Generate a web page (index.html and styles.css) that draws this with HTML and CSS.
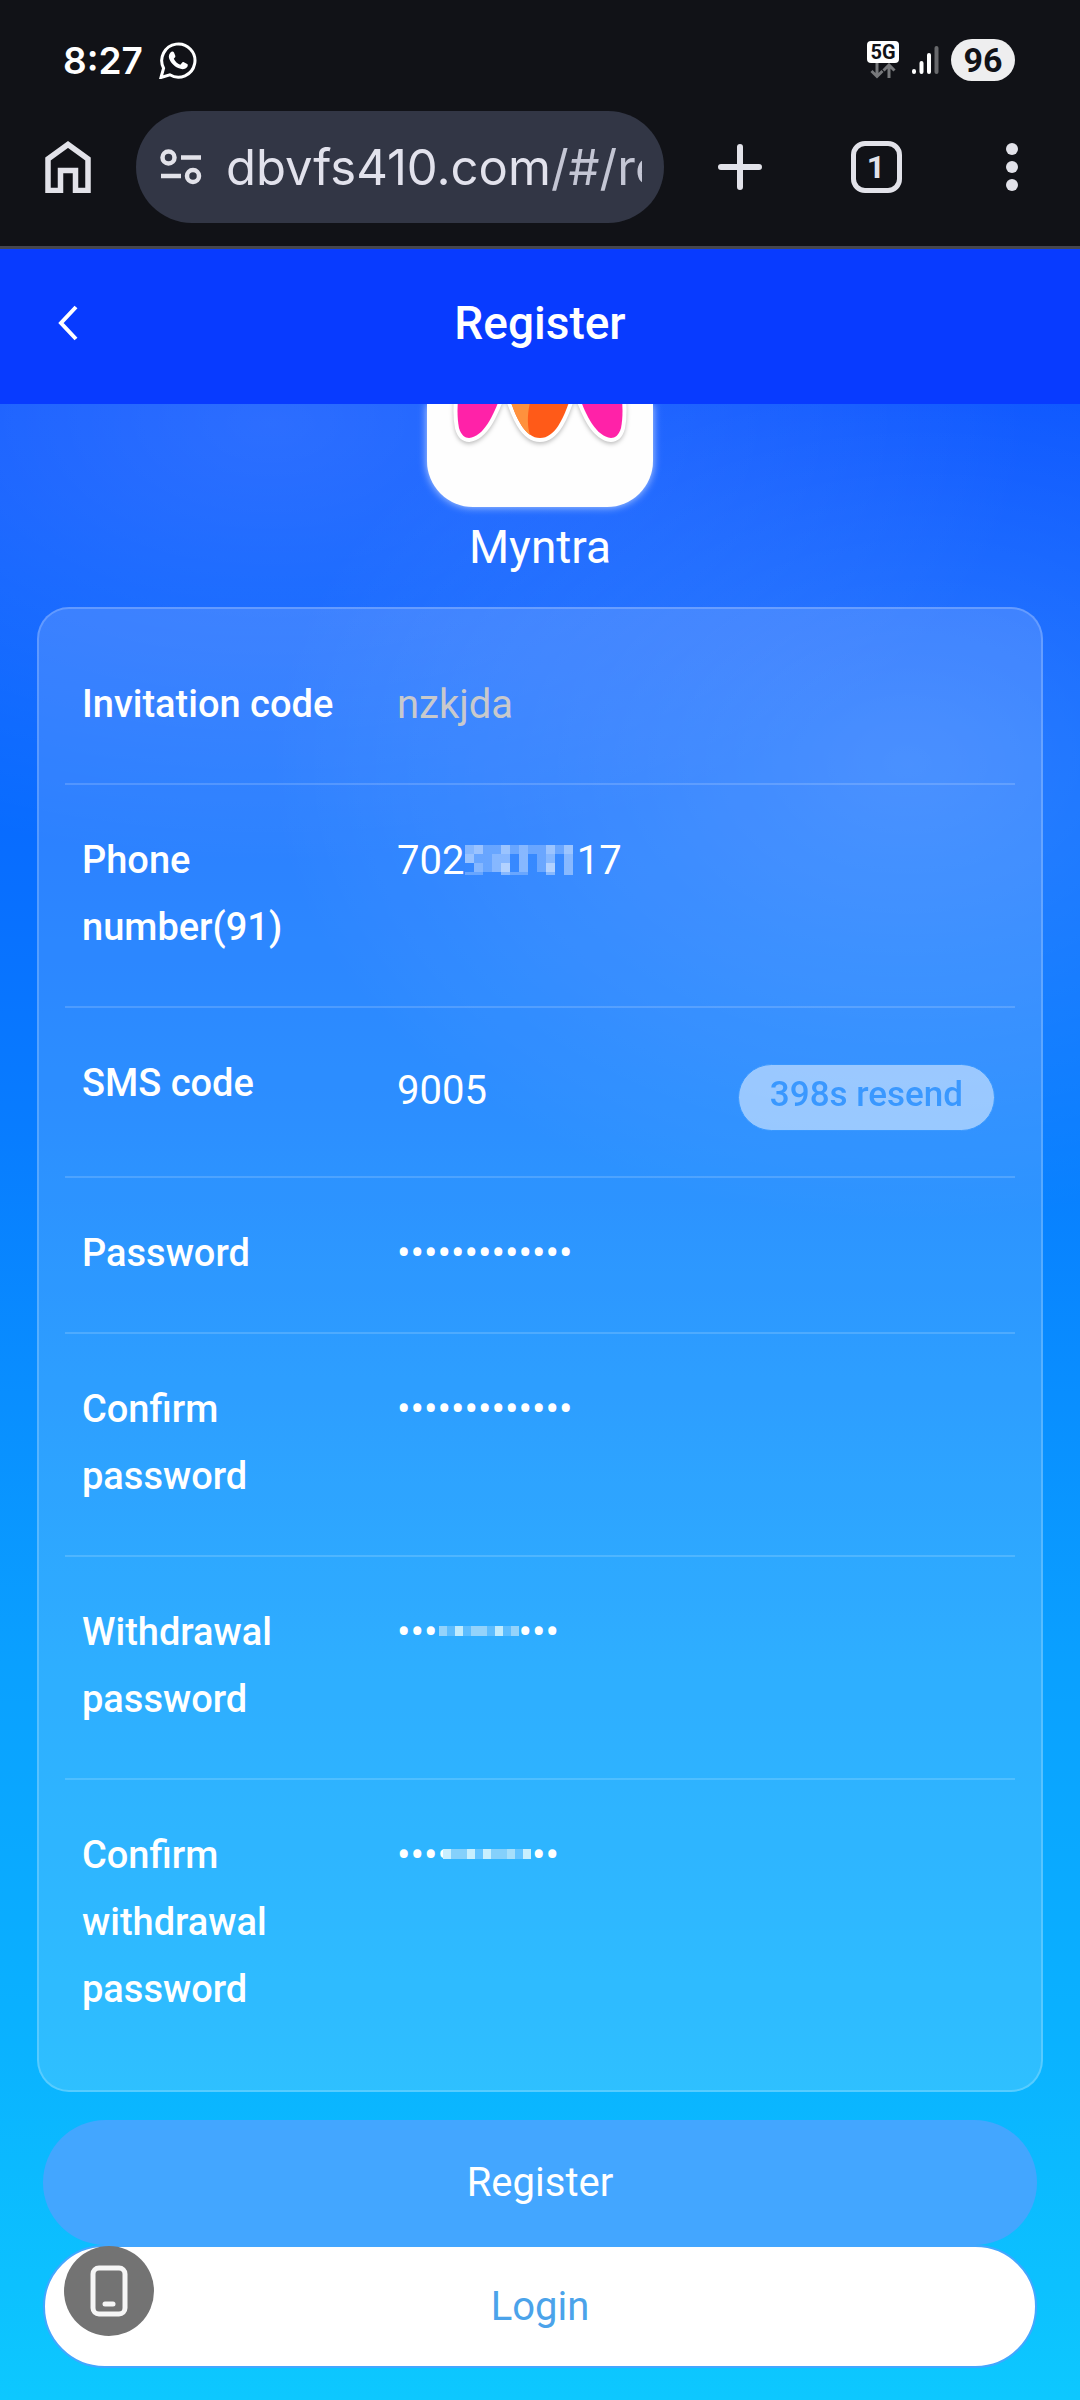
FILE: index.html
```html
<!DOCTYPE html>
<html lang="en">
<head>
    <meta charset="UTF-8">
    <meta name="viewport" content="width=device-width, initial-scale=1.0">
    <title>Register</title>
    <link rel="stylesheet" href="styles.css">
</head>
<body>

<!-- Status bar -->
<div class="status-bar">
    <span class="clock">8:27</span>
    <svg class="whatsapp" width="38" height="38" viewBox="0 0 38 38">
        <path d="M2 36.500l2.600-9.300A16.600 16.600 0 1 1 10.800 33.800z" fill="none" stroke="#fff" stroke-width="3"/>
        <path d="M11.500 11.500c1-1.400 2.800-1.500 3.500 0l1.300 3.200c.3 1-.2 1.700-1.500 3 1.500 3 3.500 4.800 6.500 6l2-2.200c.5-.5 1-.5 1.600-.2l3.300 1.600c1 .5.700 2.500-.5 3.700-2 2-5 2-8.500.5-4.500-2-8-6-9.200-10-.5-2.200.2-4.200 1.500-5.600z" fill="#fff"/>
    </svg>
    <div class="status-right">
        <div class="network">
            <span class="network-type">5G</span>
            <svg width="26" height="16" viewBox="0 0 26 16" fill="none" stroke="#77787b" stroke-width="3">
                <path d="M7 0v13M1.500 8L7 13.500 12.500 8M19 15V2M13.500 7.500L19 2l5.500 5.500"/>
            </svg>
        </div>
        <svg class="signal" width="28" height="30" viewBox="0 0 28 30" stroke-width="4" stroke-linecap="round">
            <path d="M3 26v1M10.500 18v9M18 10v17" stroke="#fff"/>
            <path d="M25.500 3v24" stroke="#68696c"/>
        </svg>
        <span class="battery">96</span>
    </div>
</div>

<!-- Browser toolbar -->
<div class="toolbar">
    <button class="tool" aria-label="Home">
        <svg width="46" height="52" viewBox="0 0 46 52" fill="none" stroke="#e2e2e9" stroke-width="5.500">
            <path d="M3 49.500V18L23 3.500 43 18v31.500H30.500V29.500h-15v20z"/>
        </svg>
    </button>
    <div class="address">
        <svg width="42" height="38" viewBox="0 0 42 38" fill="none" stroke="#e2e2e9" stroke-width="4.500">
            <circle cx="8.500" cy="9.500" r="6"/>
            <path d="M21 9.500h20M1 28h20"/>
            <circle cx="33" cy="28" r="6"/>
        </svg>
        <div class="url">dbvfs410.com<span>/#/re</span></div>
    </div>
    <button class="tool" aria-label="New tab">
        <svg width="46" height="48" viewBox="0 0 46 48" stroke="#e2e2e9" stroke-width="6" stroke-linecap="round">
            <path d="M23 4v40M4 24h38"/>
        </svg>
    </button>
    <button class="tool tabs" aria-label="Tabs"><span>1</span></button>
    <button class="tool" aria-label="More">
        <svg width="12" height="48" viewBox="0 0 12 48" fill="#e2e2e9">
            <circle cx="6" cy="6" r="6"/>
            <circle cx="6" cy="24" r="6"/>
            <circle cx="6" cy="42" r="6"/>
        </svg>
    </button>
</div>

<header class="header">
    <button class="back" aria-label="Back">
        <svg width="20" height="36" viewBox="0 0 20 36" fill="none" stroke="#fff" stroke-width="4">
            <path d="M18 2L3 18l15 16"/>
        </svg>
    </button>
    <h1>Register</h1>
</header>

<main class="page">
    <div class="logo-clip">
        <svg class="logo" width="226" height="103" viewBox="0 0 226 103">
            <g stroke="#fff" stroke-width="8" paint-order="stroke">
                <path d="M32-14C30 0 30 14 32 24 34 31 38 34 42 34 58 32 67 10 76-14z" fill="#ff22a8"/>
                <path d="M194-14C196 0 196 14 194 24 192 31 188 34 184 34 168 32 158 10 150-14z" fill="#ff22a8"/>
                <path d="M80-14C88 12 97 34 113 34S138 12 146-14z" fill="#ff5a18"/>
            </g>
            <path d="M80-14C87 10 94 24 103 31 99 18 101 4 106-14z" fill="#ff913d"/>
        </svg>
    </div>
    <p class="brand">Myntra</p>

    <form class="form" id="register-form">
        <div class="row">
            <label for="invite">Invitation code</label>
            <div class="field"><input id="invite" type="text" value="nzkjda" disabled></div>
        </div>
        <div class="row">
            <label for="phone">Phone number(91)</label>
            <div class="field">
                <input id="phone" type="text" value="702&#8199;&#8199;&#8199;&#8199;&#8199;17">
                <svg class="mask mask-phone" width="108" height="30" viewBox="0 0 108 30" fill="#fff" shape-rendering="crispEdges">
                    <path opacity=".25" d="M18 0h18v9h-18zM45 0h9v9h-9zM63 0h18v9h-18zM90 0h9v9h-9zM9 9h18v9h-18zM72 9h9v9h-9zM18 18h9v9h-9zM72 18h9v9h-9zM0 27h18v3h-18zM45 27h18v3h-18z"/>
                    <path opacity=".4" d="M0 0h9v9h-9zM27 9h9v18h-9zM54 0h9v27h-9zM9 18h9v9h-9zM36 9h9v9h-9zM81 9h9v9h-9zM99 9h9v21h-9zM36 27h9v3h-9zM81 27h9v3h-9z"/>
                    <path opacity=".5" d="M9 0h9v9h-9zM0 9h9v9h-9zM36 0h9v9h-9zM81 0h9v9h-9zM99 0h9v9h-9z"/>
                    <path opacity=".62" d="M36 18h9v9h-9zM81 18h9v9h-9z"/>
                </svg>
            </div>
        </div>
        <div class="row">
            <label for="sms">SMS code</label>
            <div class="field field-sms">
                <input id="sms" type="text" value="9005">
                <button class="resend" type="button">398s resend</button>
            </div>
        </div>
        <div class="row">
            <label for="password">Password</label>
            <div class="field"><input id="password" type="password" value="xxxxxxxxxxxxx"></div>
        </div>
        <div class="row">
            <label for="password2">Confirm password</label>
            <div class="field"><input id="password2" type="password" value="xxxxxxxxxxxxx"></div>
        </div>
        <div class="row">
            <label for="withdraw">Withdrawal password</label>
            <div class="field">
                <input id="withdraw" type="password" value="xxxxxxxxxxxx">
                <svg class="mask mask-dots" width="80" height="10" viewBox="0 0 80 10" shape-rendering="crispEdges">
                    <path fill="#5dbdff" d="M0 0h80v10H0z"/>
                    <path fill="#94d3fb" d="M0 0h8v10H0zM32 0h16v10H32zM72 0h8v10h-8z"/>
                    <path fill="#c1ebfd" d="M16 0h8v10h-8zM56 0h8v10h-8z"/>
                </svg>
            </div>
        </div>
        <div class="row">
            <label for="withdraw2">Confirm withdrawal password</label>
            <div class="field">
                <input id="withdraw2" type="password" value="xxxxxxxxxxxx">
                <svg class="mask mask-dots2" width="88" height="10" viewBox="0 0 88 10" shape-rendering="crispEdges">
                    <path fill="#84d0fb" d="M0 0h88v10H0z"/>
                    <path fill="#64c4ff" d="M32 0h8v10h-8zM72 0h8v10h-8z"/>
                    <path fill="#c8effe" d="M0 0h8v10H0zM24 0h8v10h-8zM40 0h8v10h-8zM80 0h8v10h-8z"/>
                    <path fill="#a6dffb" d="M64 0h8v10h-8z"/>
                </svg>
            </div>
        </div>
    </form>

    <div class="actions">
        <button class="btn btn-register" type="submit" form="register-form">Register</button>
        <button class="btn btn-login" type="button">Login</button>
        <button class="device" type="button" aria-label="Device">
            <svg width="38" height="52" viewBox="0 0 38 52" fill="none" stroke="#f6f6f6" stroke-width="5">
                <rect x="3" y="3" width="32" height="46" rx="6"/>
                <path d="M15 39h8" stroke-linecap="round"/>
            </svg>
        </button>
    </div>
</main>

</body>
</html>
```
FILE: styles.css
```css
* {
    box-sizing: border-box;
}

body {
    font-family: Roboto, sans-serif;
    margin: 0;
    min-height: 100vh;
    display: flex;
    flex-direction: column;
    background-color: #111217;
    color: white;
}

button {
    font-family: inherit;
    border: none;
    padding: 0;
    background: none;
    color: inherit;
    cursor: pointer;
}

svg {
    display: block;
    flex-shrink: 0;
}

/* Status bar */
.status-bar {
    display: flex;
    align-items: center;
    height: 110px;
    padding: 10px 65px 0 63px;
}

.clock {
    font-family: Inter, sans-serif;
    font-size: 37px;
    font-weight: 600;
}

.whatsapp {
    margin-left: 16px;
}

.status-right {
    display: flex;
    align-items: center;
    gap: 12px;
    margin-left: auto;
}

.network {
    display: flex;
    flex-direction: column;
    align-items: center;
}

.network-type {
    width: 32px;
    height: 22px;
    border-radius: 4px;
    background-color: white;
    color: #111217;
    font-size: 20px;
    font-weight: 700;
    line-height: 22px;
    text-align: center;
}

.battery {
    width: 64px;
    height: 42px;
    border-radius: 21px;
    background-color: #eeeeef;
    color: #111217;
    font-size: 34px;
    font-weight: 700;
    line-height: 42px;
    text-align: center;
}

/* Browser toolbar */
.toolbar {
    display: flex;
    align-items: center;
    height: 139px;
    padding-bottom: 22px;
    border-bottom: 3px solid #45464f;
}

.tool {
    display: flex;
    align-items: center;
    justify-content: center;
    width: 136px;
    height: 112px;
}

.address {
    flex: 1;
    display: flex;
    align-items: center;
    gap: 24px;
    min-width: 0;
    height: 112px;
    margin-right: 8px;
    padding: 0 22px 0 24px;
    border-radius: 56px;
    background-color: #323645;
}

.url {
    flex: 1;
    overflow: hidden;
    color: #e2e2ec;
    font-family: Inter, sans-serif;
    font-size: 49px;
    white-space: nowrap;
}

.url span {
    color: #c4c6d4;
}

.tabs span {
    width: 51px;
    height: 52px;
    border: 5px solid #e2e2e9;
    border-radius: 14px;
    color: #e2e2e9;
    font-size: 32px;
    font-weight: 700;
    line-height: 42px;
}

/* Page header */
.header {
    display: grid;
    grid-template-columns: 136px 1fr 136px;
    align-items: center;
    height: 155px;
    padding-bottom: 7px;
    background-color: #083bff;
}

.back {
    display: flex;
    align-items: center;
    justify-content: center;
    height: 100px;
}

.header h1 {
    margin: 0;
    font-size: 46px;
    font-weight: 500;
    text-align: center;
}

.page {
    flex: 1;
    padding-bottom: 34px;
    background-image:
        radial-gradient(640px 460px at 84% 18%, rgba(255,255,255,0.14), rgba(255,255,255,0)),
        radial-gradient(760px 440px at 25% 1%, rgba(255,255,255,0.14), rgba(255,255,255,0)),
        linear-gradient(#0a55ff, #0866ff 16%, #087cff 36%, #0aa0ff 63%, #0ab2ff 82%, #0dc8ff);
}

.logo-clip {
    display: flex;
    justify-content: center;
    height: 113px;
    overflow: hidden;
}

.logo {
    height: 103px;
    border-radius: 0 0 46px 46px;
    background-color: #fefefe;
    box-shadow: 0 0 8px rgba(255,255,255,0.7);
}

.logo g {
    filter: drop-shadow(0 2px 2px rgba(0,0,0,0.25));
}

.brand {
    margin: 0;
    font-size: 46px;
    line-height: 60px;
    text-align: center;
}

/* Register form */
.form {
    margin: 30px 37px 0;
    padding: 20px 26px 22px;
    border: 2px solid rgba(255,255,255,0.2);
    border-radius: 32px;
    background-color: rgba(255,255,255,0.15);
}

.row {
    display: flex;
    padding: 42px 20px 45px 17px;
    border-bottom: 2px solid rgba(255,255,255,0.16);
}

.row:last-child {
    border-bottom: none;
}

.row label {
    width: 270px;
    margin-right: 45px;
    font-size: 38px;
    font-weight: 500;
    line-height: 67px;
}

.field {
    position: relative;
    flex: 1;
    display: flex;
    min-width: 0;
}

.field input {
    flex: 1;
    min-width: 0;
    height: 67px;
    padding: 0;
    border: none;
    outline: none;
    background: none;
    color: white;
    font-family: inherit;
    font-size: 40px;
}

.field input:disabled {
    color: #c8c9cc;
}

.field-sms {
    align-items: flex-end;
}

.field-sms input {
    height: 81px;
}

.resend {
    height: 67px;
    padding: 0 31px 6px;
    border: 1px solid #409eff;
    border-radius: 34px;
    background-color: white;
    color: #409eff;
    font-size: 35px;
    font-weight: 500;
    opacity: 0.5;
}

/* Blocks over the hidden characters */
.mask {
    position: absolute;
}

.mask-phone {
    top: 18px;
    left: 68px;
}

.mask-dots {
    top: 27px;
    left: 42px;
}

.mask-dots2 {
    top: 27px;
    left: 46px;
}

/* Buttons */
.actions {
    position: relative;
    margin: 28px 43px 0;
}

.btn {
    display: block;
    width: 100%;
    height: 125px;
    border-radius: 63px;
    font-size: 40px;
}

.btn-register {
    background-color: #43a6ff;
}

.btn-login {
    height: 123px;
    border: 2px solid #43a6ff;
    background-color: white;
    color: #4ba3ea;
}

.device {
    position: absolute;
    left: 21px;
    bottom: 32px;
    display: flex;
    align-items: center;
    justify-content: center;
    width: 90px;
    height: 90px;
    border-radius: 50%;
    background-color: #737373;
}
```
